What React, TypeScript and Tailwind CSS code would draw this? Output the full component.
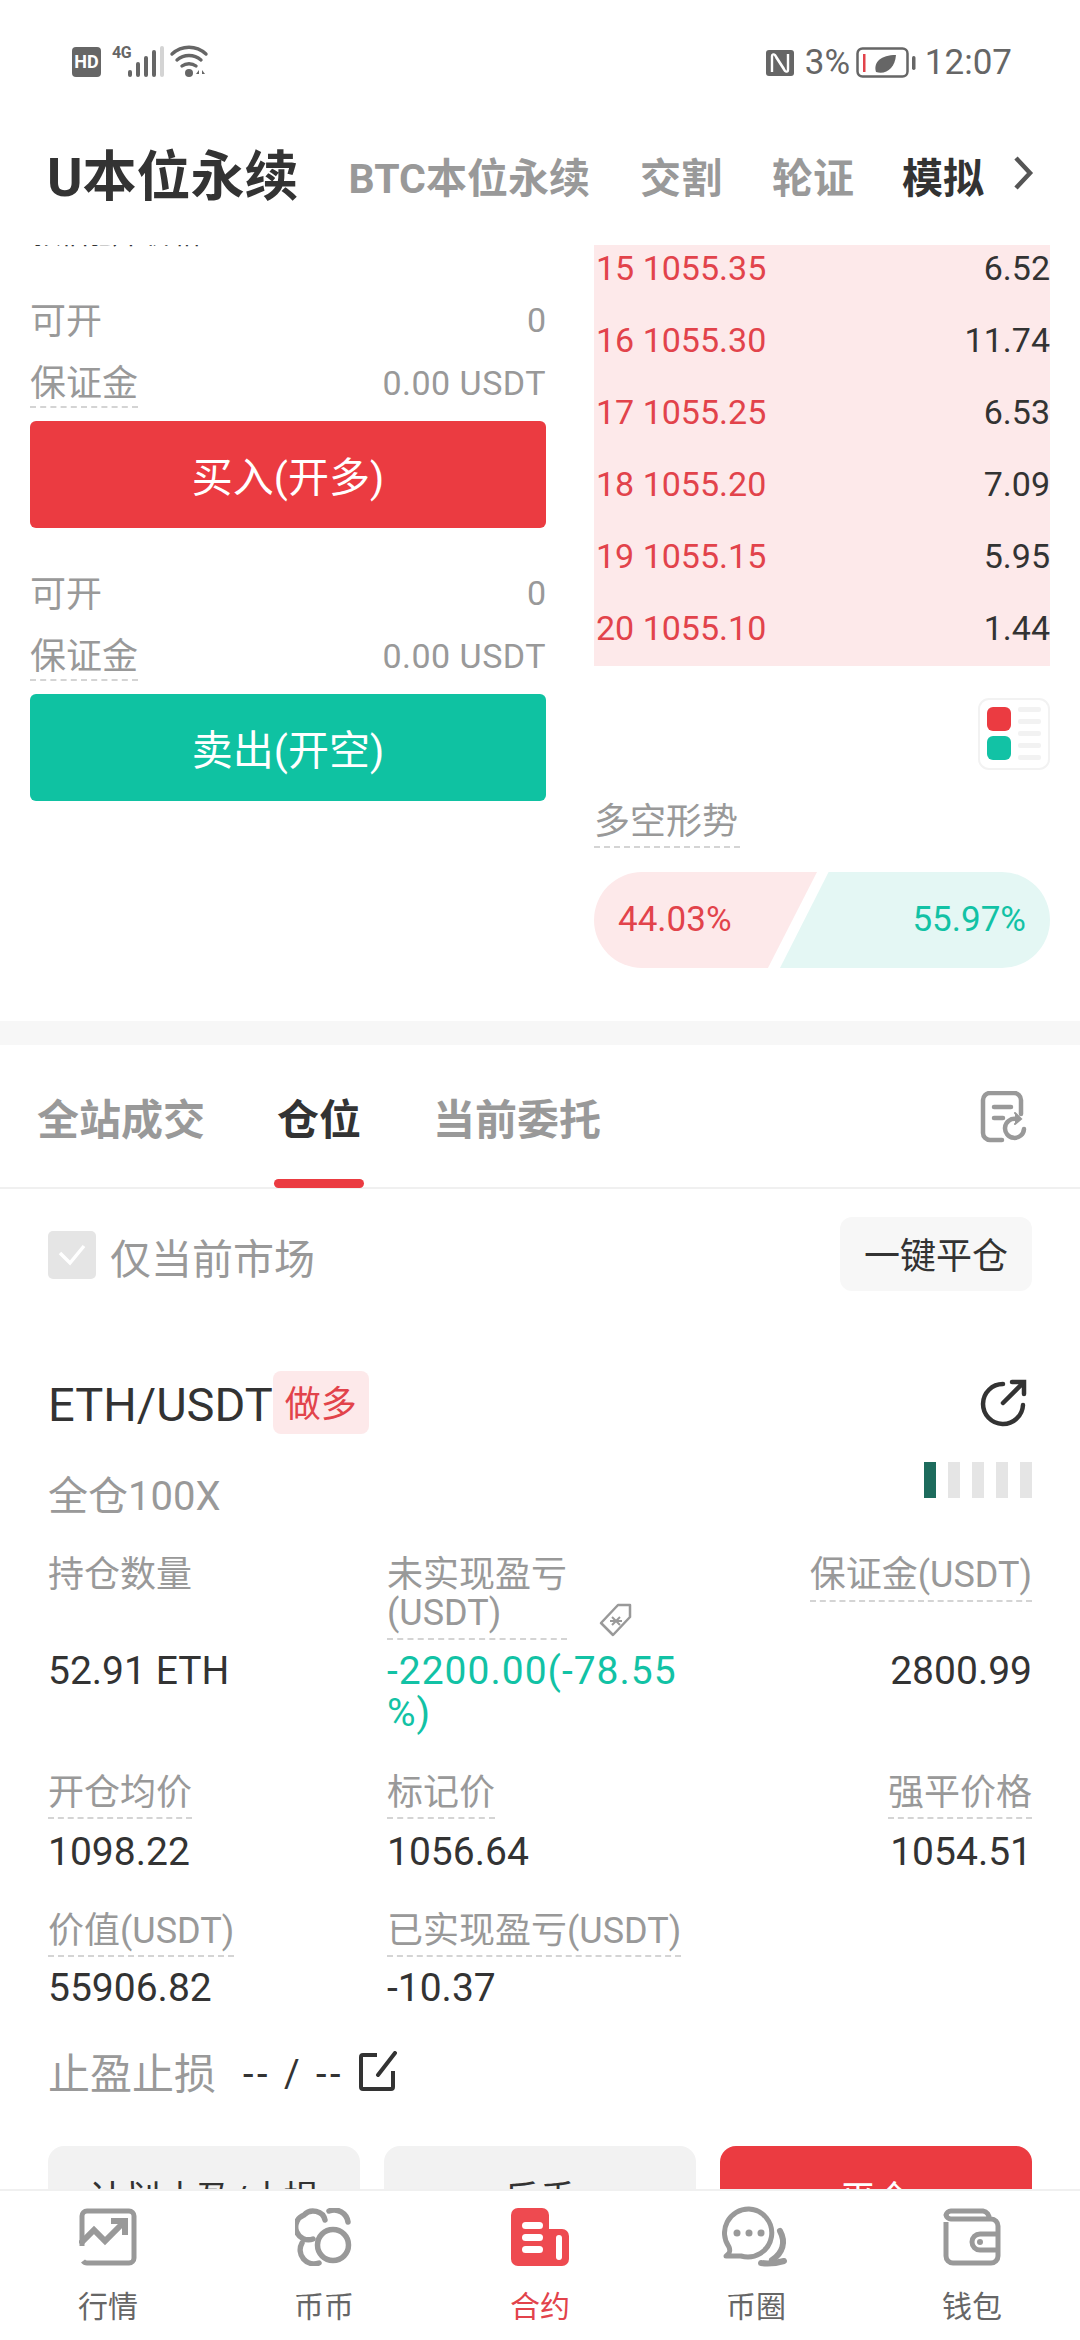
const FONT = "font-['Roboto','Noto_Sans_CJK_SC',sans-serif]"

const asks = [
  ['15', '1055.35', '6.52'],
  ['16', '1055.30', '11.74'],
  ['17', '1055.25', '6.53'],
  ['18', '1055.20', '7.09'],
  ['19', '1055.15', '5.95'],
  ['20', '1055.10', '1.44']
]

function StatusBar(): React.JSX.Element {
  return (
    <div className="flex h-[120px] shrink-0 items-start justify-between pt-[45px] pl-[72px] pr-[68px] text-[#666]">
      <div className="flex items-start">
        <div className="mt-[2px] flex h-[30px] w-[29px] items-center justify-center rounded-[4px] bg-[#666] text-[18px] font-bold leading-[30px] text-white">
          HD
        </div>
        <span className="ml-[11px] w-[18px] text-[16px] font-bold leading-[16px] tracking-[-0.5px]">4G</span>
        <svg width="84" height="33" viewBox="56 0 84 33" fill="#666" className="-ml-[2px]">
          <rect x="56" y="25" width="4" height="7" rx="2" />
          <rect x="64" y="17" width="4" height="15" rx="2" />
          <rect x="72" y="11" width="4" height="21" rx="2" />
          <rect x="80" y="5" width="4" height="27" rx="2" />
          <rect x="88" y="1" width="4" height="31" rx="2" fill="#d4d4d4" />
          <path d="M100 9c10-9 24-9 34 0M105 15c7-6 17-6 24 0M110 21c4-3 10-3 14 0" stroke="#666" strokeWidth="3.400" strokeLinecap="round" fill="none" />
          <circle cx="117" cy="28" r="4" />
          <path d="M127 25l-3 4h3zM130 25l3 4h-3zM128 25v7M130 25v7" />
        </svg>
      </div>
      <div className="flex items-center">
        <svg width="30" height="30" viewBox="0 0 30 30" fill="#666">
          <path d="M4 2h22a3 3 0 0 1 3 3v20a3 3 0 0 1-3 3H4a3 3 0 0 1-3-3V5a3 3 0 0 1 3-3z" />
          <path d="M7 24V8c0-2 2-2 3-1l9 14M23 6v16c0 2-2 2-3 1L11 9" stroke="#fff" strokeWidth="2.400" fill="none" />
        </svg>
        <span className="ml-[10px] w-[50px] text-[35px] leading-[36px]">3%</span>
        <svg className="ml-[1px]" width="62" height="32" viewBox="0 0 62 32" fill="none">
          <rect x="1.500" y="1.500" width="50" height="28" rx="5" stroke="#666" strokeWidth="2.500" />
          <rect x="7" y="7" width="2.500" height="18" fill="#e2434b" />
          <path d="M20 25c-3-10 5-17 20-17-1 13-10 20-20 17z" fill="#666" />
          <rect x="56" y="9" width="3.500" height="14" rx="1.700" fill="#666" />
        </svg>
        <span className="ml-[7px] text-[35px] leading-[36px]">12:07</span>
      </div>
    </div>
  )
}

function Header(): React.JSX.Element {
  return (
    <div className="flex h-[125px] shrink-0 items-start pt-[28px] pl-[47px] font-bold text-[#999]">
      <span className="text-[54px] leading-[60px] text-[#333]">U本位永续</span>
      <span className="ml-[50px] mt-[8px] text-[41px] leading-[46px]">BTC本位永续</span>
      <span className="ml-[50px] mt-[8px] text-[41px] leading-[46px]">交割</span>
      <span className="ml-[50px] mt-[8px] text-[41px] leading-[46px]">轮证</span>
      <span className="ml-[48px] mt-[8px] text-[41px] leading-[46px] text-[#333]">模拟</span>
      <svg className="ml-[27px] mt-[7px]" width="24" height="36" viewBox="0 0 24 36" fill="none">
        <path d="M5 3l14 15-14 15" stroke="#555" strokeWidth="4.500" />
      </svg>
    </div>
  )
}

function TradeGroup({ label, tone }: { label: string; tone: string }): React.JSX.Element {
  return (
    <div className="text-[#999]">
      <div className="flex h-[48px] items-center justify-between text-[36px]">
        <span className="mt-[3px]">可开</span>
        <span className="text-[34px]">0</span>
      </div>
      <div className="mt-[16px] flex h-[48px] items-start justify-between">
        <span className="h-[48px] border-b-2 border-dashed border-[#d4d4d4] text-[36px] leading-[48px]">保证金</span>
        <span className="text-[34px] leading-[46px] tracking-[0.5px]">0.00 USDT</span>
      </div>
      <button className={`mt-[13px] flex h-[107px] w-full items-center justify-center rounded-[6px] pt-[8px] text-[41px] text-white ${tone}`}>
        {label}
      </button>
    </div>
  )
}

function OrderBook(): React.JSX.Element {
  return (
    <div className="h-[421px] overflow-hidden bg-[#fde9ea]">
      <div className="-mt-[13px]">
        {asks.map(([idx, price, qty]) => (
          <div key={idx} className="flex h-[72px] items-center justify-between pl-[2px] text-[34px] leading-[40px]">
            <span className="text-[#e2434b]">
              {idx} {price}
            </span>
            <span className="text-[#333]">{qty}</span>
          </div>
        ))}
      </div>
    </div>
  )
}

function DepthToggle(): React.JSX.Element {
  return (
    <svg width="72" height="72" viewBox="0 0 72 72" fill="none">
      <rect x="1" y="1" width="70" height="70" rx="10" stroke="#f2f2f2" strokeWidth="2" />
      <rect x="9" y="9" width="24" height="24" rx="6" fill="#eb3b41" />
      <rect x="9" y="38" width="24" height="24" rx="6" fill="#12c2a5" />
      <rect x="40" y="9" width="23" height="5" rx="2" fill="#f2f2f2" />
      <rect x="40" y="21" width="23" height="5" rx="2" fill="#f2f2f2" />
      <rect x="40" y="33" width="23" height="5" rx="2" fill="#f2f2f2" />
      <rect x="40" y="45" width="23" height="5" rx="2" fill="#f2f2f2" />
      <rect x="40" y="57" width="23" height="5" rx="2" fill="#f2f2f2" />
    </svg>
  )
}

function TopSection(): React.JSX.Element {
  return (
    <div className="flex h-[776px] items-start">
      <div className="ml-[30px] w-[516px]">
        <div className="h-[5px] overflow-hidden pl-[3px]">
          <div className="-mt-[30px] text-[28px] leading-[40px] text-[#333]">预估强平价格</div>
        </div>
        <div className="mt-[46px]">
          <TradeGroup label="买入(开多)" tone="bg-[#eb3b41]" />
        </div>
        <div className="mt-[41px]">
          <TradeGroup label="卖出(开空)" tone="bg-[#0fc2a2]" />
        </div>
      </div>
      <div className="ml-[48px] w-[456px]">
        <OrderBook />
        <div className="mt-[32px] flex justify-end">
          <DepthToggle />
        </div>
        <div className="mt-[30px] w-[146px] border-b-2 border-dashed border-[#d4d4d4] pb-[2px] text-[36px] leading-[44px] whitespace-nowrap text-[#999]">
          多空形势
        </div>
        <div className="mt-[24px] flex h-[96px] text-[35px] leading-[96px]">
          <div className="w-[223px] rounded-l-[48px] bg-[#fde9ea] pl-[24px] text-[#e2434b] [clip-path:polygon(0_0,100%_0,78%_100%,0_100%)]">
            44.03%
          </div>
          <div className="-ml-[37px] w-[270px] rounded-r-[48px] bg-[#e4f7f4] pr-[24px] text-right text-[#12c2a5] [clip-path:polygon(18%_0,100%_0,100%_100%,0_100%)]">
            55.97%
          </div>
        </div>
      </div>
    </div>
  )
}

function Tabs(): React.JSX.Element {
  return (
    <div className="flex h-[144px] items-start border-b-2 border-[#f0f0f0] pl-[37px] text-[42px] font-bold leading-[48px] text-[#999]">
      <span className="mt-[52px]">全站成交</span>
      <div className="ml-[69px] flex w-[90px] flex-col items-center">
        <span className="mt-[52px] text-[#333]">仓位</span>
        <div className="mt-[34px] h-[9px] w-[90px] rounded-[5px] bg-[#eb3b41]" />
      </div>
      <span className="ml-[69px] mt-[52px]">当前委托</span>
      <svg className="ml-auto mr-[50px] mt-[46px]" width="50" height="52" viewBox="0 0 50 52" fill="none" stroke="#999" strokeWidth="4.500" strokeLinecap="round">
        <path d="M22 49H10a7 7 0 0 1-7-7V9a7 7 0 0 1 7-7h24a7 7 0 0 1 7 7v14" />
        <path d="M14 16h17M14 27h9" />
        <path d="M44 38a9.500 9.500 0 1 1-8-10" />
        <path d="M35 22l6 6-6 5" fill="#999" strokeWidth="2" />
      </svg>
    </div>
  )
}

function MarketFilter(): React.JSX.Element {
  return (
    <div className="flex h-[102px] items-start justify-between pl-[48px] pr-[48px]">
      <div className="mt-[42px] flex items-start text-[41px] leading-[48px] text-[#999]">
        <div className="flex h-[48px] w-[48px] items-center justify-center rounded-[5px] bg-[#e5e5e5]">
          <svg width="28" height="24" viewBox="0 0 28 24" fill="none">
            <path d="M2 10l10 10L26 3" stroke="#fff" strokeWidth="3.500" />
          </svg>
        </div>
        <span className="ml-[14px] mt-[5px]">仅当前市场</span>
      </div>
      <button className="mt-[28px] flex h-[74px] w-[192px] items-center justify-center rounded-[12px] bg-[#f7f7f7] pt-[5px] text-[36px] text-[#333]">
        一键平仓
      </button>
    </div>
  )
}

function Label({ children, pad = 'pb-[5px]' }: { children: React.ReactNode; pad?: string }): React.JSX.Element {
  return (
    <span className={`inline-block border-b-2 border-dashed border-[#d4d4d4] text-[36px] leading-[38px] text-[#999] ${pad}`}>
      {children}
    </span>
  )
}

function Position(): React.JSX.Element {
  return (
    <div className="px-[48px]">
      <div className="flex items-start">
        <span className="mt-[87px] text-[47px] leading-[54px] text-[#333]">ETH/USDT</span>
        <span className="mt-[80px] flex h-[63px] w-[96px] items-center justify-center rounded-[8px] bg-[#fde9ea] pt-[5px] text-[36px] text-[#e2434b]">
          做多
        </span>
        <svg className="ml-auto mr-[5px] mt-[88px]" width="48" height="48" viewBox="0 0 48 48" fill="none" stroke="#333" strokeWidth="4.500" strokeLinecap="round">
          <path d="M24 5a20 20 0 1 0 20 21" />
          <path d="M24 24L44 4M33 3h12v12" />
        </svg>
      </div>
      <div className="flex items-start justify-between">
        <span className="mt-[38px] text-[40px] leading-[50px] text-[#999]">全仓100X</span>
        <div className="mt-[28px] flex gap-[12px]">
          <div className="h-[36px] w-[12px] bg-[#1d6b5c]" />
          <div className="h-[36px] w-[12px] bg-[#e5e5e5]" />
          <div className="h-[36px] w-[12px] bg-[#e5e5e5]" />
          <div className="h-[36px] w-[12px] bg-[#e5e5e5]" />
          <div className="h-[36px] w-[12px] bg-[#e5e5e5]" />
        </div>
      </div>

      <div className="mt-[34px] grid grid-cols-[339px_300px_1fr] items-start">
        <span className="text-[36px] leading-[38px] text-[#999]">持仓数量</span>
        <div className="flex items-end">
          <Label pad="pb-[6px]">
            未实现盈亏
            <br />
            (USDT)
          </Label>
          <svg className="mb-[2px] ml-[31px]" width="36" height="36" viewBox="0 0 36 36" fill="none" stroke="#999" strokeWidth="2.500">
            <path d="M20 3h12v12L15 33 3 21z" strokeLinejoin="round" />
            <path d="M14 15l8 8M22 15l-8 8M12 19h12" strokeWidth="2" />
          </svg>
        </div>
        <div className="text-right">
          <Label pad="pb-[6px]">保证金(USDT)</Label>
        </div>
      </div>
      <div className="mt-[10px] grid grid-cols-[339px_300px_1fr] items-start text-[39px] leading-[42px] text-[#333]">
        <span>52.91 ETH</span>
        <span className="tracking-[1px] text-[#12c2a5]">
          -2200.00(-78.55
          <br />
          %)
        </span>
        <span className="text-right">2800.99</span>
      </div>

      <div className="mt-[40px] grid grid-cols-[339px_300px_1fr] items-start">
        <div><Label>开仓均价</Label></div>
        <div><Label>标记价</Label></div>
        <div className="text-right"><Label>强平价格</Label></div>
      </div>
      <div className="mt-[12px] grid grid-cols-[339px_300px_1fr] items-start text-[39px] leading-[42px] text-[#333]">
        <span>1098.22</span>
        <span>1056.64</span>
        <span className="text-right">1054.51</span>
      </div>

      <div className="mt-[39px] grid grid-cols-[339px_1fr] items-start">
        <div><Label>价值(USDT)</Label></div>
        <div><Label>已实现盈亏(USDT)</Label></div>
      </div>
      <div className="mt-[10px] grid grid-cols-[339px_1fr] items-start text-[39px] leading-[42px] text-[#333]">
        <span>55906.82</span>
        <span>-10.37</span>
      </div>

      <div className="mt-[37px] flex h-[56px] items-center">
        <span className="text-[42px] text-[#999]">止盈止损</span>
        <span className="ml-[27px] text-[38px] tracking-[3.500px] text-[#333]">-- / --</span>
        <svg className="-mt-[6px] ml-[15px]" width="38" height="40" viewBox="0 0 38 40" fill="none" stroke="#333" strokeWidth="4">
          <path d="M18 4H4a2 2 0 0 0-2 2v30a2 2 0 0 0 2 2h28a2 2 0 0 0 2-2V20" />
          <path d="M36 2L19 24" strokeLinecap="round" />
        </svg>
      </div>

      <div className="mt-[44px] grid grid-cols-3 gap-[24px] text-[36px] leading-[108px]">
        <div className="h-[112px] rounded-[16px] bg-[#f2f2f2] text-center text-[#333]">计划止盈/止损</div>
        <div className="h-[112px] rounded-[16px] bg-[#f2f2f2] text-center text-[#333]">反手</div>
        <div className="h-[112px] rounded-[16px] bg-[#eb3b41] text-center text-white">平仓</div>
      </div>
    </div>
  )
}

function MarketIcon(): React.JSX.Element {
  return (
    <svg width="58" height="58" viewBox="0 0 58 58" fill="none" stroke="#999" strokeWidth="5">
      <path d="M3 38V8a5 5 0 0 1 5-5h42a5 5 0 0 1 5 5v42a5 5 0 0 1-5 5H8a5 5 0 0 1-4-2" />
      <path d="M1 36l14-14 11 11 18-18" strokeWidth="6" />
      <path d="M32 13h14v14" strokeWidth="6" />
    </svg>
  )
}

function SpotIcon(): React.JSX.Element {
  return (
    <svg width="58" height="58" viewBox="0 0 58 58" fill="none" stroke="#999" strokeWidth="5.500" strokeLinecap="round">
      <path d="M30 12a12 11 0 0 0-21-5 12 12 0 0 0 9 24" />
      <path d="M34 3a14 14 0 0 1 19 11" />
      <path d="M7 35a14 14 0 0 0 17 20" />
      <circle cx="38" cy="37" r="15.500" />
    </svg>
  )
}

function ContractIcon(): React.JSX.Element {
  return (
    <svg width="58" height="58" viewBox="0 0 58 58">
      <path d="M7 0h24a7 7 0 0 1 7 7v51H7a7 7 0 0 1-7-7V7a7 7 0 0 1 7-7z" fill="#ee4a50" />
      <path d="M38 21h13a7 7 0 0 1 7 7v23a7 7 0 0 1-7 7H38z" fill="#ee4a50" />
      <rect x="45" y="27" width="6" height="25" rx="3" fill="#fff" />
      <rect x="11" y="14" width="21" height="7" rx="3.500" fill="#fff" />
      <rect x="11" y="26" width="21" height="7" rx="3.500" fill="#fff" />
      <rect x="11" y="38" width="21" height="7" rx="3.500" fill="#fff" />
    </svg>
  )
}

function CommunityIcon(): React.JSX.Element {
  return (
    <svg width="68" height="62" viewBox="0 0 68 62" fill="none" stroke="#999" strokeWidth="5">
      <path d="M27 3a24 24 0 1 1-8 47H4c3-2 5-4 3-9A24 24 0 0 1 27 3z" strokeLinejoin="round" />
      <circle cx="15" cy="27" r="3.500" fill="#999" stroke="none" />
      <circle cx="27" cy="27" r="3.500" fill="#999" stroke="none" />
      <circle cx="39" cy="27" r="3.500" fill="#999" stroke="none" />
      <path d="M58 25c6 11 3 22-8 29" strokeLinecap="round" strokeWidth="6" />
      <path d="M39 57c8 1 16 0 23-2" strokeLinecap="round" strokeWidth="6" />
    </svg>
  )
}

function WalletIcon(): React.JSX.Element {
  return (
    <svg width="58" height="58" viewBox="0 0 58 58" fill="none" stroke="#999" strokeWidth="5">
      <path d="M3 14V48a7 7 0 0 0 7 7h38a7 7 0 0 0 7-7V18a7 7 0 0 0-7-7H8a5 5 0 0 1-5-4 5 5 0 0 1 5-4h32a7 7 0 0 1 6 8" />
      <path d="M55 26H37a8 8 0 0 0 0 16h18" />
      <circle cx="37" cy="34" r="3" fill="#999" stroke="none" />
    </svg>
  )
}

function BottomNav(): React.JSX.Element {
  const items = [
    { label: '行情', icon: <MarketIcon /> },
    { label: '币币', icon: <SpotIcon /> },
    { label: '合约', icon: <ContractIcon />, active: true },
    { label: '币圈', icon: <CommunityIcon /> },
    { label: '钱包', icon: <WalletIcon /> }
  ]
  return (
    <div className="grid h-[151px] shrink-0 grid-cols-5 border-t-2 border-[#f0f0f0] bg-white">
      {items.map((item) => (
        <div key={item.label} className="flex flex-col items-center">
          <div className="mt-[16px] flex h-[60px] items-center justify-center">{item.icon}</div>
          <span className={`mt-[22px] text-[30px] leading-[36px] ${item.active ? 'text-[#e2434b]' : 'text-[#666]'}`}>
            {item.label}
          </span>
        </div>
      ))}
    </div>
  )
}

export default function App(): React.JSX.Element {
  return (
    <div className={`flex h-[2340px] w-[1080px] flex-col overflow-hidden bg-white ${FONT}`}>
      <StatusBar />
      <Header />
      <div className="min-h-0 flex-1 overflow-hidden">
        <TopSection />
        <div className="h-[24px] bg-[#f7f7f7]" />
        <Tabs />
        <MarketFilter />
        <Position />
      </div>
      <BottomNav />
    </div>
  )
}
